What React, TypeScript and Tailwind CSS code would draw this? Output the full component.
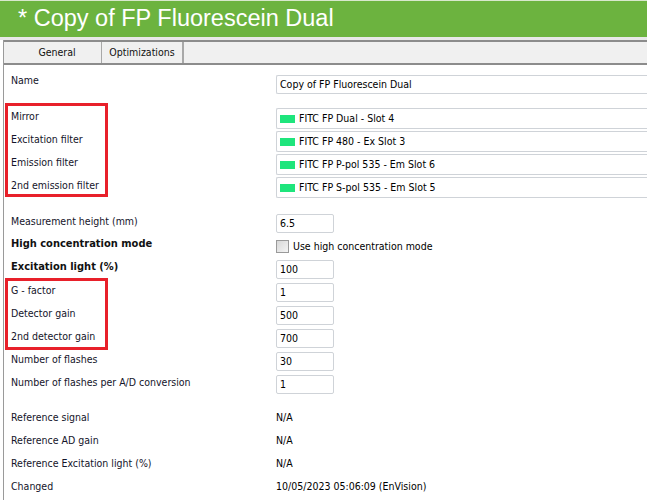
const filters = [
  { label: 'Mirror', value: 'FITC FP Dual - Slot 4' },
  { label: 'Excitation filter', value: 'FITC FP 480 - Ex Slot 3' },
  { label: 'Emission filter', value: 'FITC FP P-pol 535 - Em Slot 6' },
  { label: '2nd emission filter', value: 'FITC FP S-pol 535 - Em Slot 5' },
];

type Row = { label: string; value?: string; bold?: boolean; check?: string };

const params: Row[] = [
  { label: 'Measurement height (mm)', value: '6.5' },
  { label: 'High concentration mode', bold: true, check: 'Use high concentration mode' },
  { label: 'Excitation light (%)', value: '100', bold: true },
  { label: 'G - factor', value: '1' },
  { label: 'Detector gain', value: '500' },
  { label: '2nd detector gain', value: '700' },
  { label: 'Number of flashes', value: '30' },
  { label: 'Number of flashes per A/D conversion', value: '1' },
];

const info = [
  { label: 'Reference signal', value: 'N/A' },
  { label: 'Reference AD gain', value: 'N/A' },
  { label: 'Reference Excitation light (%)', value: 'N/A' },
  { label: 'Changed', value: '10/05/2023 05:06:09 (EnVision)' },
];

const ui = "font-['DejaVu_Sans_Condensed','Liberation_Sans_Narrow',sans-serif]";

function Label({ children, bold }: { children: string; bold?: boolean }) {
  return (
    <div
      className={
        'w-[265px] shrink-0 pb-[4px] pl-[7px] ' +
        (bold ? 'text-[11px] font-bold text-[#111]' : 'text-[10.5px] text-[#14142a]')
      }
    >
      {children}
    </div>
  );
}

function NumBox({ value }: { value: string }) {
  return (
    <div className="h-[19px] w-[58px] rounded-[2px] border border-[#cfd3d8] bg-white pl-[3px] text-[10.5px] leading-[17px] text-black">
      {value}
    </div>
  );
}

export default function App() {
  return (
    <div className="relative h-[500px] w-[647px] overflow-hidden bg-white">
      <div className="h-[37px] border-t border-[#d8e8cc] bg-[#6cb33f] pl-[18px] font-['Liberation_Sans',Arial,sans-serif] text-[23.5px] leading-[35px] text-white">
        * Copy of FP Fluorescein Dual
      </div>
      <div className="h-[3px] bg-[#e8e8e8]" />
      <div className={'ml-[3px] border-l border-[#9a9a9a] ' + ui}>
        <div className="flex h-[25px] border-y-2 border-[#8c8c8c] bg-[#f0f0f0] text-[10.5px] text-[#111]">
          <div className="flex w-[98px] items-center justify-center border-r border-[#a8a8a8] pl-[9px] pt-[1px]">
            General
          </div>
          <div className="flex w-[82px] items-center justify-center border-r-2 border-[#a8a8a8] pt-[1px]">
            Optimizations
          </div>
        </div>

        <div className="pt-[6px]">
          <div className="flex h-[23px] items-center">
            <Label>Name</Label>
            <div className="ml-[7px] mt-[4px] h-[19px] flex-1 rounded-l-[2px] border border-r-0 border-[#cfd3d8] pl-[3px] text-[10.5px] leading-[17px] text-black">
              Copy of FP Fluorescein Dual
            </div>
          </div>

          <div className="mt-[13px] flex flex-col">
            {filters.map((f) => (
              <div key={f.label} className="flex h-[23px] items-center">
                <Label>{f.label}</Label>
                <div className="ml-[7px] flex h-[21px] flex-1 items-center gap-[4px] rounded-l-[2px] border border-r-0 border-[#cfd3d8] pl-[3px] text-[10.5px] text-black">
                  <span className="h-[8px] w-[15px] bg-[#1ee57c]" />
                  {f.value}
                </div>
              </div>
            ))}
          </div>

          <div className="mt-[13px] flex flex-col">
            {params.map((p) => (
              <div key={p.label} className="flex h-[23px] items-center">
                <Label bold={p.bold}>{p.label}</Label>
                <div className="ml-[7px] flex items-center">
                  {p.check ? (
                    <div className="flex items-center gap-[4px] text-[10.5px] text-black">
                      <span className="h-[13px] w-[13px] border border-[#9a9a9a] bg-gradient-to-br from-[#d8d8d8] to-[#f4f4f4]" />
                      {p.check}
                    </div>
                  ) : (
                    <NumBox value={p.value!} />
                  )}
                </div>
              </div>
            ))}
          </div>

          <div className="mt-[12px] flex flex-col">
            {info.map((r) => (
              <div key={r.label} className="flex h-[23px] items-center">
                <Label>{r.label}</Label>
                <div className="ml-[7px] pb-[3px] text-[10.5px] text-black">{r.value}</div>
              </div>
            ))}
          </div>
        </div>
      </div>

      <div className="absolute left-[5px] top-[103px] h-[94px] w-[103px] border-[3px] border-[#e8202a]" />
      <div className="absolute left-[5px] top-[278px] h-[72px] w-[103px] border-[3px] border-[#e8202a]" />
    </div>
  );
}
